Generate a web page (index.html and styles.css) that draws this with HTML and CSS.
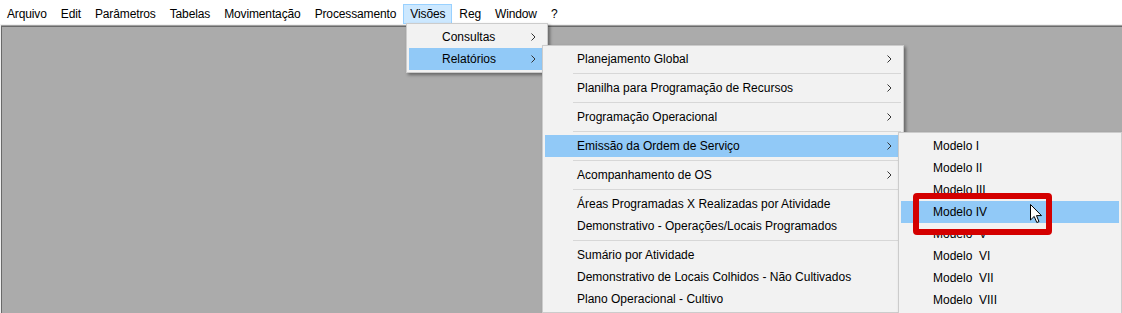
FILE: index.html
```html
<!DOCTYPE html>
<html lang="pt-BR">
<head>
  <meta charset="UTF-8">
  <title>Visões - Relatórios</title>
  <link rel="stylesheet" href="styles.css">
</head>
<body>
  <div class="app">
    <ul class="menubar">
      <li>Arquivo</li>
      <li>Edit</li>
      <li>Parâmetros</li>
      <li>Tabelas</li>
      <li>Movimentação</li>
      <li>Processamento</li>
      <li class="open">Visões</li>
      <li>Reg</li>
      <li>Window</li>
      <li>?</li>
    </ul>
    <div class="workspace"></div>
  </div>

  <!-- menu Visões -->
  <div class="popup pop-visoes">
    <div class="item"><span>Consultas</span><svg class="chev" width="5" height="8"><polyline points="0.5,0.5 4,4 0.5,7.5"/></svg></div>
    <div class="item active"><span>Relatórios</span><svg class="chev" width="5" height="8"><polyline points="0.5,0.5 4,4 0.5,7.5"/></svg></div>
  </div>

  <!-- Relatórios -->
  <div class="popup pop-relatorios">
    <div class="item"><span>Planejamento Global</span><svg class="chev" width="5" height="8"><polyline points="0.5,0.5 4,4 0.5,7.5"/></svg></div>
    <div class="sep"></div>
    <div class="item"><span>Planilha para Programação de Recursos</span><svg class="chev" width="5" height="8"><polyline points="0.5,0.5 4,4 0.5,7.5"/></svg></div>
    <div class="sep"></div>
    <div class="item"><span>Programação Operacional</span><svg class="chev" width="5" height="8"><polyline points="0.5,0.5 4,4 0.5,7.5"/></svg></div>
    <div class="sep"></div>
    <div class="item active"><span>Emissão da Ordem de Serviço</span><svg class="chev" width="5" height="8"><polyline points="0.5,0.5 4,4 0.5,7.5"/></svg></div>
    <div class="sep"></div>
    <div class="item"><span>Acompanhamento de OS</span><svg class="chev" width="5" height="8"><polyline points="0.5,0.5 4,4 0.5,7.5"/></svg></div>
    <div class="sep"></div>
    <div class="item"><span>Áreas Programadas X Realizadas por Atividade</span></div>
    <div class="item"><span>Demonstrativo - Operações/Locais Programados</span></div>
    <div class="sep"></div>
    <div class="item"><span>Sumário por Atividade</span></div>
    <div class="item"><span>Demonstrativo de Locais Colhidos - Não Cultivados</span></div>
    <div class="item"><span>Plano Operacional - Cultivo</span></div>
  </div>

  <!-- Emissão da Ordem de Serviço -->
  <div class="popup pop-emissao">
    <div class="item"><span>Modelo I</span></div>
    <div class="item"><span>Modelo II</span></div>
    <div class="item"><span>Modelo III</span></div>
    <div class="item active"><span>Modelo IV</span></div>
    <div class="item"><span>Modelo  V</span></div>
    <div class="item"><span>Modelo  VI</span></div>
    <div class="item"><span>Modelo  VII</span></div>
    <div class="item"><span>Modelo  VIII</span></div>
  </div>

  <div class="mark"></div>

  <svg class="cursor" width="13" height="20" viewBox="0 0 13 20">
    <path d="M0.5,0.5 L0.5,16 L4.2,12.4 L6.8,18.5 L9,17.6 L6.5,11.6 L11.5,11.6 Z" fill="#fff" stroke="#000" stroke-width="1" stroke-linejoin="miter"/>
  </svg>
</body>
</html>
```

FILE: styles.css
```css
html, body {
  margin: 0;
  padding: 0;
  height: 100%;
  overflow: hidden;
}
body {
  font-family: "Liberation Sans", Arial, sans-serif;
  font-size: 12px;
  color: #000;
  background: #f0f0f0;
}
.app {
  display: flex;
  flex-direction: column;
  height: 313px;
}
.menubar {
  list-style: none;
  margin: 0;
  padding: 4px 0 0 0;
  height: 20px;
  background: #fff;
  border-bottom: 1px solid #f0f0f0;
  display: flex;
  letter-spacing: -0.13px;
}
.menubar li {
  padding: 1px 6px 0;
  line-height: 16px;
  height: 17px;
  border: 1px solid transparent;
}
.menubar li.open {
  background: #cce8ff;
  border-color: #99d1ff;
}
.workspace {
  flex: 1;
  margin-left: 1px;
  background: #ababab;
  border-top: 1px solid #a0a0a0;
  box-shadow: inset 1px 1px 0 #696969;
}

/* popup menus */
.popup {
  position: absolute;
  box-sizing: border-box;
  background: #f2f2f2;
  border: 1px solid #cccccc;
  padding: 2px 0;
  box-shadow: 2px 2px 3px rgba(0, 0, 0, 0.4);
}
.popup .item {
  display: flex;
  justify-content: space-between;
  align-items: center;
  height: 22px;
  line-height: 22px;
  margin: 0 2px;
  padding: 0 9px 0 32px;
  white-space: pre;
}
.popup .item.active {
  background: #91c9f7;
}
.chev polyline {
  fill: none;
  stroke: #333;
  stroke-width: 1;
}
.sep {
  height: 1px;
  background: #d7d7d7;
  margin: 3px 2px 3px 30px;
}
.pop-visoes {
  left: 406px;
  top: 23px;
  width: 142px;
}
.pop-visoes .item {
  padding-left: 33px;
}
.pop-relatorios {
  left: 542px;
  top: 45px;
  width: 362px;
}
.pop-emissao {
  left: 898px;
  top: 132px;
  width: 224px;
}

/* highlight box */
.mark {
  position: absolute;
  left: 913px;
  top: 193px;
  width: 127px;
  height: 30px;
  border: 6px solid #d40000;
  border-radius: 4px;
}
.cursor {
  position: absolute;
  left: 1030px;
  top: 204px;
}
```
